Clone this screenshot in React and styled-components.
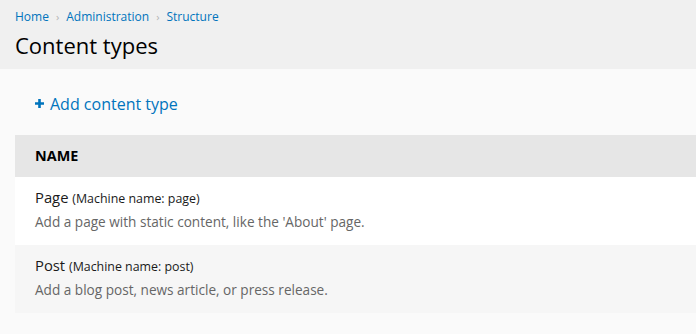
import React from "react";
import styled, { createGlobalStyle } from "styled-components";

const GlobalStyle = createGlobalStyle`
  html, body {
    margin: 0;
    padding: 0;
    background: #fafafa;
  }
  body {
    font-family: "Open Sans", "Liberation Sans", sans-serif;
    color: #222;
  }
`;

const Header = styled.header`
  background: #f0f0f0;
  height: 69px;
  padding: 6px 15px 0;
  box-sizing: border-box;
`;

const Breadcrumb = styled.nav`
  display: flex;
  align-items: center;
  font-size: 12px;
  line-height: 21px;
`;

const Crumb = styled.a`
  color: #0074bd;
  text-decoration: none;
`;

const Separator = styled.span`
  color: #b3b3b3;
  font-size: 11px;
  margin: 0 7px;
`;

const Title = styled.h1`
  margin: 2px 0 0;
  font-size: 22px;
  font-weight: 400;
  line-height: 32px;
  color: #000;
`;

const Content = styled.main`
  padding: 22px 0 0 15px;
`;

const ActionLink = styled.a`
  display: inline-flex;
  align-items: center;
  gap: 6px;
  margin-left: 20px;
  color: #0074bd;
  font-size: 16px;
  line-height: 24px;
  text-decoration: none;
`;

const Table = styled.table`
  width: 100%;
  margin-top: 19px;
  border-collapse: collapse;
`;

const HeadCell = styled.th`
  background: #e6e6e6;
  height: 42px;
  padding: 0 20px;
  text-align: left;
  font-size: 14.4px;
  font-weight: 700;
  color: #000;
`;

const Row = styled.tr`
  background: ${(p) => (p.$even ? "#f6f6f6" : "#fff")};
`;

const Cell = styled.td`
  height: 68px;
  padding: 0 20px 2px;
  box-sizing: border-box;
`;

const Label = styled.div`
  font-size: 14.8px;
  line-height: 22px;
  color: #1a1a1a;
`;

const Machine = styled.small`
  font-size: 12.4px;
`;

const Description = styled.div`
  font-size: 13.6px;
  line-height: 24px;
  color: #666;
`;

const types = [
  { label: "Page", machine: "page", description: "Add a page with static content, like the 'About' page." },
  { label: "Post", machine: "post", description: "Add a blog post, news article, or press release." },
];

export default function App() {
  return (
    <>
      <GlobalStyle />
      <Header>
        <Breadcrumb>
          <Crumb href="#">Home</Crumb>
          <Separator>›</Separator>
          <Crumb href="#">Administration</Crumb>
          <Separator>›</Separator>
          <Crumb href="#">Structure</Crumb>
        </Breadcrumb>
        <Title>Content types</Title>
      </Header>
      <Content>
        <ActionLink href="#">
          <svg width="9" height="9" viewBox="0 0 9 9">
            <path d="M3.2 0h2.6v3.2H9v2.6H5.8V9H3.2V5.8H0V3.2h3.2z" fill="#0074bd" />
          </svg>
          Add content type
        </ActionLink>
        <Table>
          <thead>
            <tr>
              <HeadCell>NAME</HeadCell>
            </tr>
          </thead>
          <tbody>
            {types.map((t, i) => (
              <Row key={t.machine} $even={i % 2 === 1}>
                <Cell>
                  <Label>
                    {t.label} <Machine>(Machine name: {t.machine})</Machine>
                  </Label>
                  <Description>{t.description}</Description>
                </Cell>
              </Row>
            ))}
          </tbody>
        </Table>
      </Content>
    </>
  );
}
